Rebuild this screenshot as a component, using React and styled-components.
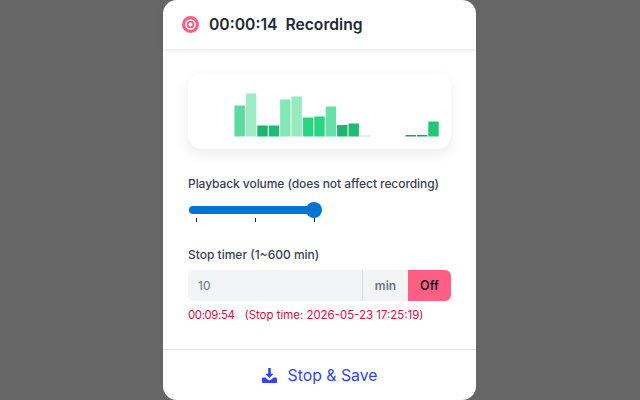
import React from "react";
import styled, { createGlobalStyle } from "styled-components";

const Global = createGlobalStyle`
  html, body { margin: 0; padding: 0; height: 100%; background: #666666; overflow: hidden; }
  body { font-family: Inter, "Noto Sans", sans-serif; }
`;

const BARS = [
  [31, "#5cdb9f"], [43, "#9cebc4"], [11, "#1db46c"], [11, "#1fbb72"],
  [37, "#85e6b6"], [40, "#97eac0"], [19, "#2ad581"], [20, "#2ad581"],
  [30, "#66e0a4"], [11.5, "#1fb56e"], [13, "#1fbb72"], [1, "#c5e3d6"],
  [0, "#fff"], [0, "#fff"], [0, "#fff"], [1.5, "#1f9e62"], [1.5, "#1f9e62"], [15, "#20c777"],
];

const App = () => {
  return (
    <Page>
      <Global />
      <Panel>
        <Header>
          <svg width="17" height="17" viewBox="0 0 17 17">
            <circle cx="8.5" cy="8.5" r="8.5" fill="#ff5f82" />
            <circle cx="8.5" cy="8.5" r="4.6" fill="none" stroke="#fff" strokeWidth="1.5" />
            <circle cx="8.5" cy="8.5" r="1.9" fill="#fff" />
          </svg>
          <HeaderText>00:00:14&nbsp; Recording</HeaderText>
        </Header>
        <Body>
          <ChartCard>
            <svg width="263" height="76" viewBox="0 0 263 76">
              {BARS.map(([h, c], i) => (
                <rect key={i} x={46.5 + i * 11.4} y={63.5 - h} width="10.4" height={h} fill={c} />
              ))}
            </svg>
          </ChartCard>
          <VolumeLabel>Playback volume (does not affect recording)</VolumeLabel>
          <Slider>
            <Track />
            <Thumb />
            <Ticks>
              <Tick />
              <Tick />
              <Tick />
            </Ticks>
          </Slider>
          <TimerLabel>Stop timer (1~600 min)</TimerLabel>
          <InputRow>
            <TimerInput readOnly placeholder="10" />
            <Unit>min</Unit>
            <OffButton>Off</OffButton>
          </InputRow>
          <Countdown>
            <Remaining>00:09:54</Remaining>
            <span>(Stop time: 2026-05-23 17:25:19)</span>
          </Countdown>
        </Body>
        <Footer>
          <svg width="15" height="15" viewBox="0 0 16 16" fill="#2f45ff">
            <path d="M6.6 0h2.8v6h3L8 10.6 3.6 6h3z" />
            <path d="M0 11.4c0-.8.6-1.4 1.4-1.4h2.3L6 12.2c1.1 1 2.9 1 4 0l2.3-2.2h2.3c.8 0 1.4.6 1.4 1.4v3.2c0 .8-.6 1.4-1.4 1.4H1.4C.6 16 0 15.4 0 14.6z" />
          </svg>
          <FooterText>Stop &amp; Save</FooterText>
        </Footer>
      </Panel>
    </Page>
  );
};

export default App;

const Page = styled.div`
  width: 640px;
  height: 400px;
  display: flex;
  justify-content: center;
  overflow: hidden;
`;

const Panel = styled.div`
  width: 313px;
  height: 400px;
  margin-left: -1px;
  background: #fff;
  border-radius: 14px;
  display: flex;
  flex-direction: column;
`;

const Header = styled.div`
  height: 49px;
  padding-left: 19px;
  display: flex;
  align-items: center;
  gap: 10px;
  flex-shrink: 0;
  box-shadow: 0 1px 4px rgba(0, 0, 0, 0.12);
`;

const HeaderText = styled.div`
  font-size: 15.7px;
  font-weight: 600;
  color: #1f2937;
`;

const Body = styled.div`
  flex: 1;
  padding: 24px 25px 0;
  display: flex;
  flex-direction: column;
`;

const ChartCard = styled.div`
  height: 76px;
  border-radius: 14px;
  background: #fff;
  box-shadow: 0 5px 14px rgba(0, 0, 0, 0.08);
  flex-shrink: 0;
`;

const VolumeLabel = styled.div`
  margin-top: 27px;
  font-size: 12px;
  letter-spacing: -0.07px;
  line-height: 16px;
  font-weight: 500;
  color: #374151;
  white-space: nowrap;
`;

const Slider = styled.div`
  position: relative;
  width: 134px;
  height: 26px;
  margin-top: 10px;
`;

const Track = styled.div`
  position: absolute;
  top: 4px;
  left: 1px;
  right: 4px;
  height: 8px;
  border-radius: 4px;
  background: #0074d4;
`;

const Thumb = styled.div`
  position: absolute;
  top: 0;
  right: 0;
  width: 16px;
  height: 16px;
  border-radius: 50%;
  background: #0074d4;
`;

const Ticks = styled.div`
  position: absolute;
  top: 16px;
  left: 7.5px;
  width: 119px;
  display: flex;
  justify-content: space-between;
`;

const Tick = styled.div`
  width: 1px;
  height: 4px;
  background: #222;
`;

const TimerLabel = styled.div`
  margin-top: 19px;
  font-size: 12px;
  line-height: 16px;
  font-weight: 500;
  color: #374151;
`;

const InputRow = styled.div`
  margin-top: 7px;
  height: 31px;
  display: flex;
`;

const TimerInput = styled.input`
  flex: 1;
  min-width: 0;
  box-sizing: border-box;
  padding: 0 10px;
  border: none;
  border-right: 1px solid #d9dce3;
  outline: none;
  border-radius: 6px 0 0 6px;
  background: #f3f4f6;
  font-family: inherit;
  font-size: 12px;
  &::placeholder {
    color: #6b7280;
    opacity: 1;
  }
`;

const Unit = styled.div`
  width: 45px;
  display: flex;
  align-items: center;
  justify-content: center;
  background: #f3f4f6;
  color: #6b7280;
  font-size: 12px;
  font-weight: 600;
`;

const OffButton = styled.div`
  width: 43px;
  display: flex;
  align-items: center;
  justify-content: center;
  border-radius: 0 6px 6px 0;
  background: #ff5f82;
  color: #1f1a2b;
  font-size: 12.5px;
  font-weight: 600;
`;

const Countdown = styled.div`
  margin-top: 6px;
  display: flex;
  gap: 10px;
  font-size: 11.45px;
  line-height: 16px;
  color: #d6103f;
  white-space: nowrap;
`;

const Remaining = styled.span`
  letter-spacing: -0.4px;
`;

const Footer = styled.div`
  height: 50px;
  flex-shrink: 0;
  border-top: 1px solid #e9eaee;
  display: flex;
  align-items: center;
  justify-content: center;
  gap: 11px;
`;

const FooterText = styled.div`
  font-size: 15.8px;
  color: #2f45ff;
`;
